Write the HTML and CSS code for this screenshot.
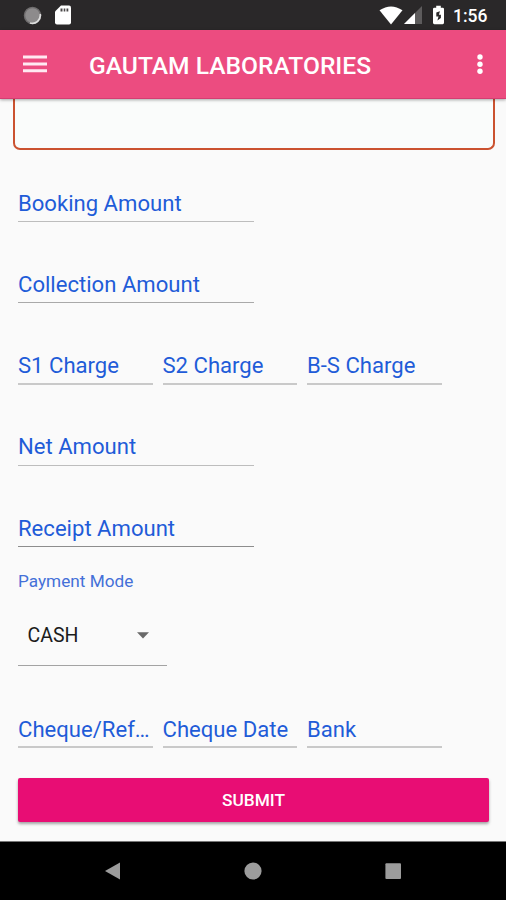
FILE: index.html
```html
<!DOCTYPE html>
<html lang="en">
<head>
    <meta charset="UTF-8">
    <meta name="viewport" content="width=device-width, initial-scale=1.0">
    <title>Gautam Laboratories</title>
    <link rel="stylesheet" href="styles.css">
</head>
<body>
    <div class="app">
        <!-- Status bar -->
        <div class="status-bar">
            <div class="status-left">
                <svg width="19" height="19" viewBox="0 0 19 19">
                    <circle cx="9.5" cy="9.5" r="8" fill="#8d8b8c" stroke="#6f6d6e" stroke-width="1.5"/>
                    <path d="M17.2 8 A8 8 0 0 1 7 17" fill="none" stroke="#dedede" stroke-width="1.8"/>
                </svg>
                <svg width="16" height="20" viewBox="0 0 16 20">
                    <path d="M6 0.5 H14 Q16 0.5 16 2.5 V17.5 Q16 19.5 14 19.5 H2 Q0 19.5 0 17.5 V6.5 Z" fill="#fff"/>
                    <path d="M5.5 3.5 h2 v3 h-2 z M8.7 3.5 h1.6 v3 h-1.6 z M11.5 3.5 h1.8 v3 h-1.8 z" fill="#4a4849"/>
                </svg>
            </div>
            <div class="status-right">
                <svg width="24" height="19" viewBox="0 0 24 19">
                    <path d="M12 18.5 L0.5 4.3 Q12 -3.3 23.5 4.3 Z" fill="#fff"/>
                </svg>
                <svg width="18" height="18" viewBox="0 0 18 18">
                    <path d="M18 0 V18 H0 Z" fill="#5d5b5c"/>
                    <path d="M11 7 V18 H0 Z" fill="#fff"/>
                </svg>
                <svg class="battery" width="11" height="20" viewBox="0 0 12 20">
                    <path d="M3.5 0 H8.5 V2 H10.5 Q12 2 12 3.5 V18.5 Q12 20 10.5 20 H1.5 Q0 20 0 18.5 V3.5 Q0 2 1.5 2 H3.5 Z" fill="#fff"/>
                    <path d="M7.6 6 L3.6 7.4 V11.6 H6 L4.8 16 L8.6 13.4 V9.6 H6.4 Z" fill="#2a2829"/>
                </svg>
                <span class="clock">1:56</span>
            </div>
        </div>

        <!-- Toolbar -->
        <div class="toolbar">
            <svg width="24" height="18" viewBox="0 0 24 18">
                <path d="M0 0.5 H24 V3.5 H0 Z M0 7.4 H24 V10.4 H0 Z M0 14.3 H24 V17.3 H0 Z" fill="#ffe9f2"/>
            </svg>
            <h1>GAUTAM LABORATORIES</h1>
            <svg width="6" height="20" viewBox="0 0 6 20">
                <circle cx="3" cy="3" r="2.7" fill="#fff"/>
                <circle cx="3" cy="10.3" r="2.7" fill="#fff"/>
                <circle cx="3" cy="17.3" r="2.7" fill="#fff"/>
            </svg>
        </div>

        <!-- Form -->
        <div class="form">
            <div class="remark-box"></div>
            <div class="row">
                <div class="field">Booking Amount</div>
            </div>
            <div class="row">
                <div class="field dark">Collection Amount</div>
            </div>
            <div class="row">
                <div class="field small">S1 Charge</div>
                <div class="field small">S2 Charge</div>
                <div class="field small">B-S Charge</div>
            </div>
            <div class="row">
                <div class="field">Net Amount</div>
            </div>
            <div class="row">
                <div class="field darker">Receipt Amount</div>
            </div>
            <div class="select-label">Payment Mode</div>
            <div class="select">
                <span>CASH</span>
                <svg width="12" height="7" viewBox="0 0 12 7">
                    <path d="M0 0.3 H12 L6 6.5 Z" fill="#696969"/>
                </svg>
            </div>
            <div class="row">
                <div class="field small">Cheque/Ref…</div>
                <div class="field small">Cheque Date</div>
                <div class="field small">Bank</div>
            </div>
            <button class="submit">SUBMIT</button>
        </div>

        <!-- Navigation bar -->
        <div class="nav-bar">
            <svg width="18" height="18" viewBox="0 0 18 18"><path d="M1 9 L16 0.5 V17.5 Z" fill="#9c9c9c"/></svg>
            <svg width="18" height="18" viewBox="0 0 18 18"><circle cx="9" cy="9" r="8.6" fill="#9c9c9c"/></svg>
            <svg width="18" height="18" viewBox="0 0 18 18"><rect x="1.4" y="1.3" width="15.6" height="15.6" rx="1" fill="#9c9c9c"/></svg>
        </div>
    </div>
</body>
</html>
```
FILE: styles.css
```css
* {
    margin: 0;
    padding: 0;
    box-sizing: border-box;
}

body {
    font-family: Roboto, "Liberation Sans", sans-serif;
    background: #fafafa;
    overflow: hidden;
}

svg {
    display: block;
    flex-shrink: 0;
}

.app {
    display: flex;
    flex-direction: column;
    width: 506px;
    height: 900px;
}

/* Status bar */
.status-bar {
    display: flex;
    justify-content: space-between;
    height: 30px;
    padding: 5px 18.5px 0 23px;
    background: #2a2829;
}

.status-left,
.status-right {
    display: flex;
    align-items: center;
    height: 20px;
}

.status-left {
    gap: 13px;
}

.status-right {
    gap: 1px;
}

.battery {
    margin: 0 8px 0 10px;
}

.clock {
    font-size: 17.5px;
    font-weight: 500;
    line-height: 20px;
    color: #fff;
    padding-top: 2px;
}

/* Toolbar */
.toolbar {
    display: flex;
    align-items: center;
    height: 69px;
    padding: 0 23px;
    background: #ec4c80;
    border-bottom: 1px solid #d43e72;
    box-shadow: 0 1px 3px rgba(0, 0, 0, 0.35);
    z-index: 1;
}

.toolbar h1 {
    flex: 1;
    margin-left: 42px;
    padding-top: 3px;
    font-size: 24.6px;
    font-weight: 500;
    line-height: 30px;
    color: #fff;
}

/* Form */
.form {
    flex: 1;
    display: flex;
    flex-direction: column;
    padding: 0 17px 0 18px;
    background: #fafafa;
}

.remark-box {
    height: 51px;
    margin: 0 -6px 0 -5px;
    border: 2px solid #cb5230;
    border-top: none;
    border-radius: 0 0 7px 7px;
    background: #fafcfb;
}

.row {
    display: flex;
    align-items: flex-end;
    gap: 10px;
    height: 81.25px;
}

.row:nth-child(2) {
    height: 72px;
}

.field {
    width: 236px;
    height: 34.4px;
    border-bottom: 1.5px solid #bdbdbd;
    font-size: 22.1px;
    line-height: 30px;
    color: #1f5cd8;
    white-space: nowrap;
}

.field.dark {
    border-color: #a9a9a9;
}

.field.darker {
    border-color: #8d8d8d;
}

.field.small {
    width: 134.5px;
    height: 34.6px;
    border-bottom: 2px solid #c9c9c9;
}

.select-label {
    margin-top: 22px;
    font-size: 17.2px;
    line-height: 24px;
    color: #4470d8;
}

.select {
    display: flex;
    align-items: center;
    justify-content: space-between;
    width: 149px;
    height: 62px;
    margin-top: 11px;
    padding: 1px 18.5px 0 9.5px;
    border-bottom: 1.5px solid #a3a3a3;
    font-size: 19.5px;
    color: #1c1c1c;
}

.submit {
    height: 44px;
    margin-top: 30px;
    border: none;
    border-radius: 2px;
    background: #e80d74;
    box-shadow: 0 2px 3px rgba(0, 0, 0, 0.35);
    font-family: inherit;
    font-size: 17.3px;
    font-weight: 500;
    color: #fff;
}

/* Cheque details */
.select + .row {
    height: 82.2px;
}

/* Navigation bar */
.nav-bar {
    display: flex;
    align-items: center;
    justify-content: center;
    gap: 122px;
    height: 59px;
    background: #000;
    border-top: 1px solid #777;
}
```
